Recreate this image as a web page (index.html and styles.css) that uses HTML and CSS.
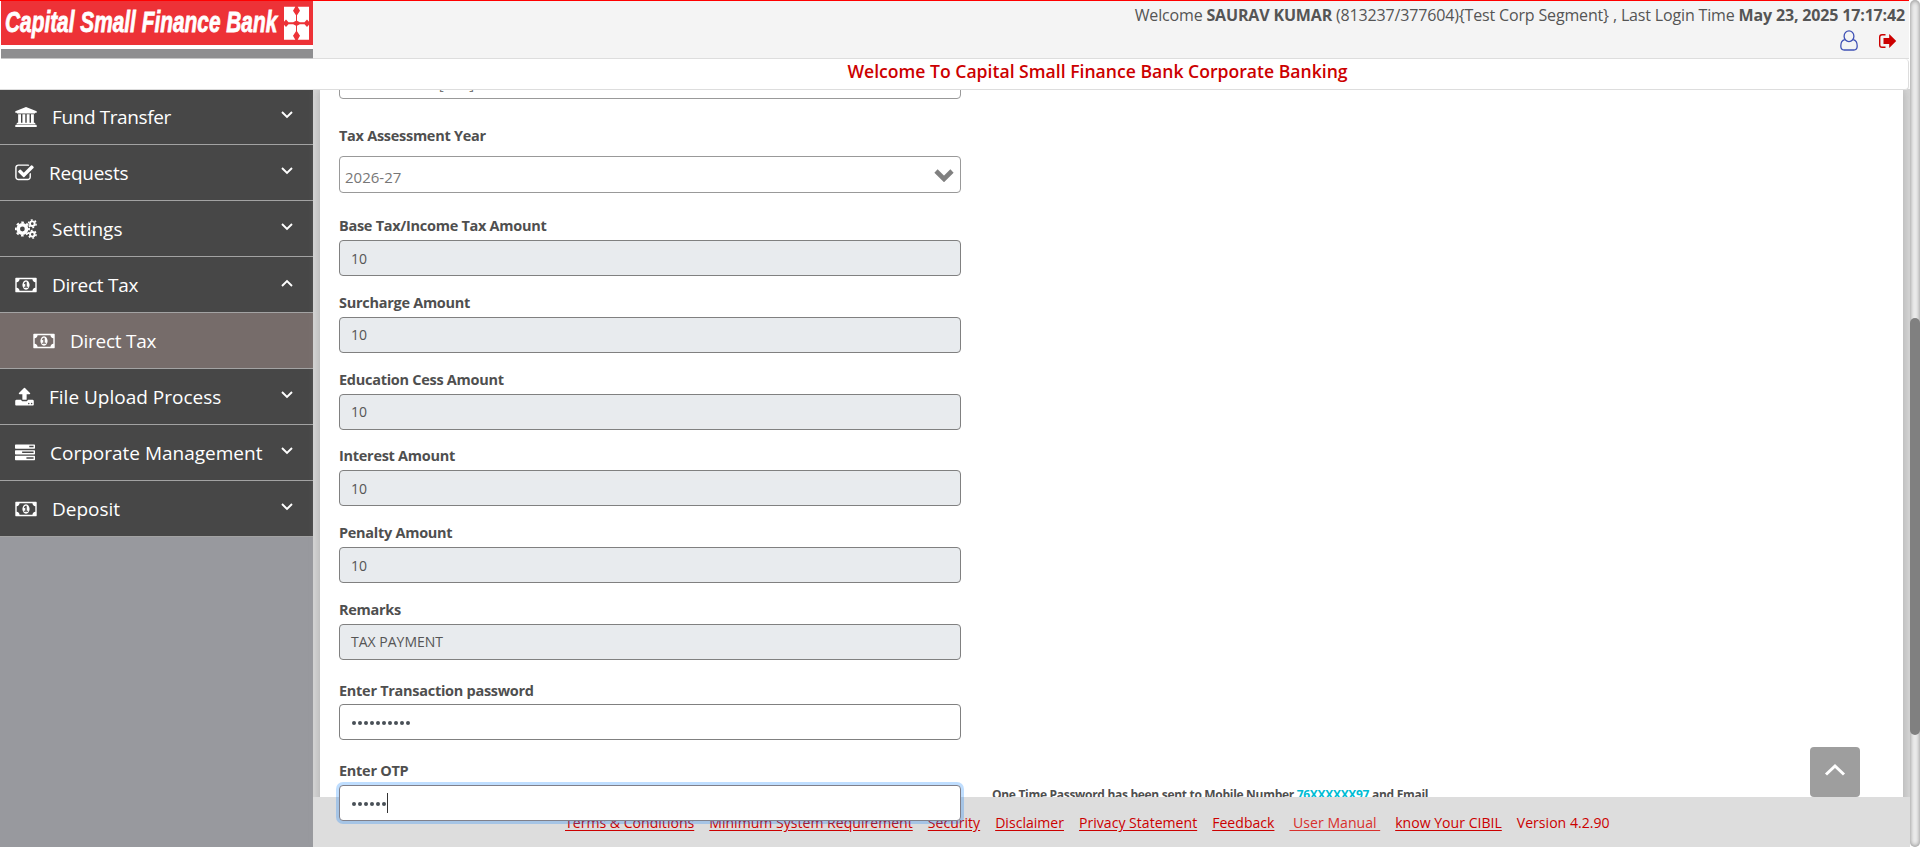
FILE: index.html
```html
<!DOCTYPE html>
<html lang="en">
<head>
<meta charset="utf-8">
<title>Corporate Banking</title>
<link rel="stylesheet" href="styles.css">
</head>
<body>
<svg class="defs" width="0" height="0">
  <symbol id="bank" viewBox="0 0 1920 1792"><path d="M960 0l960 384v128h-128q0 26-20.500 45t-48.500 19H197q-28 0-48.500-19T128 512H0V384zM256 640h256v768h128V640h256v768h128V640h256v768h128V640h256v768h59q28 0 48.500 19t20.500 45v64H128v-64q0-26 20.500-45t48.500-19h59zM1851 1600q28 0 48.500 19t20.500 45v128H0v-128q0-26 20.500-45t48.500-19z"/></symbol>
  <symbol id="check" viewBox="64 0 1664 1792"><path d="M1472 930v318q0 119-84.500 203.500T1184 1536H352q-119 0-203.500-84.500T64 1248V416q0-119 84.500-203.500T352 128h832q63 0 117 25 15 7 18 23 3 17-9 29l-49 49q-10 10-23 10-3 0-9-2-23-6-45-6H352q-66 0-113 47t-47 113v832q0 66 47 113t113 47h832q66 0 113-47t47-113v-254q0-13 9-22l64-64q10-10 23-10 6 0 12 3 20 8 20 29zm231-489l-814 814q-24 24-57 24t-57-24l-430-430q-24-24-24-57t24-57l110-110q24-24 57-24t57 24l263 263 647-647q24-24 57-24t57 24l110 110q24 24 24 57t-24 57z"/></symbol>
  <symbol id="money" viewBox="0 0 1920 1792"><path fill-rule="evenodd" d="M768 1152h384v-96h-128V608h-114l-148 137 77 80q42-37 55-57h2v288H768v96zm512-256q0 70-21 142t-59.500 134-101.500 101-138 39-138-39-101.500-101T661 1038t-21-142 21-142 59.500-134T822 519t138-39 138 39 101.500 101 59.500 134 21 142zm512 256V640q-106 0-181-75t-75-181H384q0 106-75 181t-181 75v512q106 0 181 75t75 181h1152q0-106 75-181t181-75zm128-832v1152q0 26-19 45t-45 19H64q-26 0-45-19t-19-45V320q0-26 19-45t45-19h1792q26 0 45 19t19 45z"/></symbol>
  <symbol id="upload" viewBox="0 -64 1664 1792"><path fill-rule="evenodd" d="M1280 1408q0-26-19-45t-45-19-45 19-19 45 19 45 45 19 45-19 19-45zm256 0q0-26-19-45t-45-19-45 19-19 45 19 45 45 19 45-19 19-45zm128-224v320q0 40-28 68t-68 28H96q-40 0-68-28t-28-68v-320q0-40 28-68t68-28h427q21 56 70.500 92t110.500 36h256q61 0 110.500-36t70.500-92h427q40 0 68 28t28 68zm-325-648q-17 40-59 40h-256v448q0 26-19 45t-45 19H704q-26 0-45-19t-19-45V576H384q-42 0-59-40-17-39 14-69L787 19q18-19 45-19t45 19l448 448q31 30 14 69z"/></symbol>
  <symbol id="tasks" viewBox="0 0 1792 1792"><path fill-rule="evenodd" d="M64 128h1664q64 0 64 64v256q0 64-64 64H64q-64 0-64-64V192q0-64 64-64zm1216 128v128h384V256zM64 640h1664q64 0 64 64v256q0 64-64 64H64q-64 0-64-64V704q0-64 64-64zm576 128v128h1024V768zM64 1152h1664q64 0 64 64v256q0 64-64 64H64q-64 0-64-64v-256q0-64 64-64zm960 128v128h640v-128z"/></symbol>
  <symbol id="cogs" viewBox="0 0 22 20">
    <g fill="none" stroke="#fff">
      <circle cx="7.400" cy="10" r="4.200" stroke-width="3.600"/>
      <circle cx="7.400" cy="10" r="6.600" stroke-width="1.900" stroke-dasharray="2.600 2.584" stroke-dashoffset="1.300"/>
      <circle cx="17.300" cy="4.700" r="2.300" stroke-width="1.900"/>
      <circle cx="17.300" cy="4.700" r="3.800" stroke-width="1.500" stroke-dasharray="1.900 2.079"/>
      <circle cx="17.300" cy="15.300" r="2.300" stroke-width="1.900"/>
      <circle cx="17.300" cy="15.300" r="3.800" stroke-width="1.500" stroke-dasharray="1.900 2.079"/>
    </g>
  </symbol>
  <symbol id="down" viewBox="0 0 12 8"><path d="M1 1l5 5 5-5" fill="none" stroke="#fff" stroke-width="1.900"/></symbol>
  <symbol id="up" viewBox="0 0 12 8"><path d="M1 7l5-5 5 5" fill="none" stroke="#fff" stroke-width="1.900"/></symbol>
</svg>

<header class="top">
  <div class="brand">
    <svg class="logo" width="313" height="58" viewBox="0 0 313 58">
      <rect x="0" y="0" width="313" height="58" fill="#fff"/>
      <rect x="1" y="0" width="312" height="44" fill="#ed3237"/>
      <rect x="1" y="48" width="312" height="9.500" fill="#8e8e90"/>
      <text class="logo-text" transform="translate(5 31) scale(.695 1)">Capital Small Finance Bank</text>
      <g transform="translate(296.500 22.300)" fill="#fff">
        <path id="arm" d="M-12.500-16.500h11.300l-2.300 4 3 4.500v5.500l-2.800 1.500h-4.700l-2.500-2.800-2 2.300z"/>
        <use href="#arm" transform="scale(-1 1)"/>
        <use href="#arm" transform="scale(1 -1)"/>
        <use href="#arm" transform="scale(-1 -1)"/>
      </g>
    </svg>
  </div>
  <div class="session">
    <p class="welcome">Welcome <b>SAURAV KUMAR</b> (813237/377604){Test Corp Segment} , Last Login Time <b>May 23, 2025 17:17:42</b></p>
    <div class="tools">
      <svg width="18" height="21" viewBox="0 0 18 21" fill="none" stroke="#3f51b5" stroke-width="1.300"><ellipse cx="9" cy="6.200" rx="4.900" ry="5.400"/><path d="M4.800 9.600C2 10.200.8 12.500.8 16c0 2.500 1.300 4 3.400 4h9.600c2.100 0 3.400-1.500 3.400-4 0-3.500-1.200-5.800-4-6.400"/></svg>
      <svg width="19" height="16" viewBox="0 0 19 16"><path d="M7.500 1.700H4Q1.700 1.700 1.700 4v8q0 2.300 2.300 2.300h3.500" fill="none" stroke="#c00" stroke-width="1.400"/><path d="M5.500 5h5.700V1l7 7-7 7v-4H5.500z" fill="#c00"/></svg>
    </div>
  </div>
</header>
<div class="title"><h1>Welcome To Capital Small Finance Bank Corporate Banking</h1></div>

<div class="body">
  <nav class="side">
    <a class="item"><svg class="i22"><use href="#bank"/></svg><span class="tight">Fund Transfer</span><svg class="chev"><use href="#down"/></svg></a>
    <a class="item"><svg class="i19"><use href="#check"/></svg><span class="snug">Requests</span><svg class="chev"><use href="#down"/></svg></a>
    <a class="item"><svg class="i22"><use href="#cogs"/></svg><span>Settings</span><svg class="chev"><use href="#down"/></svg></a>
    <a class="item"><svg class="i22"><use href="#money"/></svg><span class="snug">Direct Tax</span><svg class="chev"><use href="#up"/></svg></a>
    <a class="item sub"><svg class="i22"><use href="#money"/></svg><span class="snug">Direct Tax</span></a>
    <a class="item"><svg class="i19"><use href="#upload"/></svg><span>File Upload Process</span><svg class="chev"><use href="#down"/></svg></a>
    <a class="item"><svg class="i20"><use href="#tasks"/></svg><span>Corporate Management</span><svg class="chev"><use href="#down"/></svg></a>
    <a class="item"><svg class="i22"><use href="#money"/></svg><span>Deposit</span><svg class="chev"><use href="#down"/></svg></a>
  </nav>

  <main class="page">
    <section class="card">
      <form class="form">
        <div class="control select first"><span>Other than [021]</span></div>
        <label class="l-year">Tax Assessment Year</label>
        <div class="control select year"><span>2026-27</span>
          <svg width="20" height="13" viewBox="0 0 20 13"><path d="M2 2l8 8 8-8" fill="none" stroke="#808080" stroke-width="4.600"/></svg>
        </div>
        <div class="field base"><label>Base Tax/Income Tax Amount</label><div class="control ro">10</div></div>
        <div class="field"><label>Surcharge Amount</label><div class="control ro">10</div></div>
        <div class="field"><label>Education Cess Amount</label><div class="control ro">10</div></div>
        <div class="field"><label>Interest Amount</label><div class="control ro">10</div></div>
        <div class="field"><label>Penalty Amount</label><div class="control ro">10</div></div>
        <div class="field"><label>Remarks</label><div class="control ro">TAX PAYMENT</div></div>
        <div class="field pass"><label>Enter Transaction password</label><div class="control"><span class="dots"><i></i><i></i><i></i><i></i><i></i><i></i><i></i><i></i><i></i><i></i></span></div></div>
        <div class="field otp"><label>Enter OTP</label><div class="control focus"><span class="dots"><i></i><i></i><i></i><i></i><i></i><i></i></span><span class="caret"></span></div></div>
      </form>
      <p class="notice">One Time Password has been sent to Mobile Number <em>76XXXXXX97</em> and Email</p>
    </section>
  </main>
</div>

<a class="to-top"><svg width="22" height="14" viewBox="0 0 22 14"><path d="M2 11.500l9-8.500 9 8.500" fill="none" stroke="#fff" stroke-width="3"/></svg></a>
<footer class="foot">
  <a>Terms &amp; Conditions</a><a>Minimum System Requirement</a><a>Security</a><a>Disclaimer</a><a>Privacy Statement</a><a>Feedback</a><a class="manual">&nbsp;User Manual&nbsp;</a><a>know Your CIBIL</a><span>Version 4.2.90</span>
</footer>
<div class="scroll"><div class="thumb"></div></div>
</body>
</html>
```

FILE: styles.css
```css
* { box-sizing: border-box; }
html, body { margin: 0; height: 847px; overflow: hidden; }
body { position: relative; width: 1920px; background: #fff; color: #4f4f4f; font-family: "Open Sans", "Noto Sans", sans-serif; font-size: 15px; }
p, h1 { margin: 0; }
.defs { position: absolute; }

.top { position: relative; z-index: 5; display: flex; width: 1909px; height: 59px; border-top: 1px solid #f00; border-bottom: 1px solid #ddd; background: #f4f4f4; }
.brand { width: 313px; height: 58px; }
.logo { display: block; }
.logo-text { font: italic bold 30px "Liberation Sans", Arial, sans-serif; fill: #fff; stroke: #fff; stroke-width: .8px; }
.session { flex: 1; display: flex; flex-direction: column; align-items: flex-end; }
.welcome { height: 28px; padding-right: 4px; line-height: 28px; font-size: 16px; letter-spacing: -.16px; white-space: nowrap; color: #555; }
.tools { display: flex; align-items: center; gap: 20px; padding-right: 12px; margin-top: 1px; }
.title { position: relative; z-index: 5; width: 1909px; height: 31px; padding-left: 287px; border-bottom: 1px solid #ddd; border-right: 1px solid #ddd; border-radius: 0 4px 4px 0; background: #fff; text-align: center; }
.title h1 { color: #c00; font-size: 17.600px; font-weight: 600; line-height: 24px; white-space: nowrap; }

.body { display: flex; width: 1910px; height: 758px; margin-top: -1px; }
.side { width: 313px; background: #98999e; color: #fff; }
.item { display: flex; align-items: center; height: 56px; padding: 0 20px 0 15px; border-bottom: 1px solid #a3a3a3; background: #474747; font-size: 19px; white-space: nowrap; }
.item svg { flex: none; fill: #fff; height: 20px; }
.item span { flex: 1; margin-left: 15px; line-height: 30px; }
.item .tight { letter-spacing: -.4px; }
.item .snug { letter-spacing: -.25px; }
.item.sub { padding-left: 33px; background: #766c6a; }
.item .chev { width: 12px; height: 8px; margin-top: -4px; }
.i22 { width: 22px; }
.i20 { width: 20px; }
.i19 { width: 19px; }

.page { flex: 1; padding: 0 7px; background: #d6d6d6; }
.card { display: flex; align-items: flex-start; height: 758px; background: #fff; box-shadow: 0 0 10px #aaa; padding-left: 19px; }
.form { width: 622px; }
.form label { display: block; height: 25px; line-height: 22px; font-size: 14.500px; letter-spacing: -.28px; font-weight: 700; color: #4f4f4f; white-space: nowrap; }
.control { display: flex; align-items: center; height: 36px; padding: 0 11px; border: 1px solid #808080; border-radius: 4px; background: #fff; font-size: 14px; color: #555; }
.control.ro { background: #e8ebee; }
.control.select { height: 37px; padding: 4px 6px 0 5px; border-color: #999; justify-content: space-between; font-size: 15px; color: #777; }
.control.first { margin-top: -27px; padding-left: 18px; }
.form .l-year { height: 22px; margin-top: 26px; }
.control.year { margin-top: 9px; }
.control.year svg { margin-bottom: 2px; }
.field { height: 76.800px; padding-top: 15.800px; }
.form .base { padding-top: 0; height: 61px; margin-top: 22px; }
.form .pass { height: 80px; padding-top: 20px; }
.form .pass label { height: 24px; }
.form .otp { height: 81px; padding-top: 20px; }
.focus { position: relative; z-index: 4; border-color: #80808a; box-shadow: 0 0 0 3px rgba(0, 123, 255, .25); }
.dots { display: flex; gap: 2px; padding-left: 1px; }
.dots i { width: 4px; height: 4px; margin-top: 2px; border-radius: 50%; background: #495057; }
.caret { width: 1px; height: 20px; margin-left: 1px; background: #333; }
.notice { margin: 696px 0 0 31px; line-height: 20px; font-size: 12px; letter-spacing: -.3px; font-weight: 700; white-space: nowrap; }
.notice em { color: #00bcd4; font-style: normal; }

.foot { position: absolute; z-index: 3; left: 313px; top: 797px; display: flex; gap: 15px; width: 1597px; height: 50px; padding: 13px 0 0 252px; background: #ddd; font-size: 14.080px; line-height: 25px; color: #c00; white-space: nowrap; }
.foot a { text-decoration: underline; text-underline-offset: 2px; }
.foot .manual { color: #d8302c; }
.to-top { position: absolute; z-index: 3; left: 1810px; top: 747px; display: flex; align-items: center; justify-content: center; width: 50px; height: 50px; padding-bottom: 4px; border-radius: 4px; background: #9e9e9e; }
.scroll { position: absolute; z-index: 6; right: 0; top: 0; width: 10px; height: 847px; padding-top: 318px; border-radius: 5px; background: #eee; box-shadow: inset 0 0 5px #808080; }
.thumb { height: 417px; border-radius: 5px; background: #808080; }
```
